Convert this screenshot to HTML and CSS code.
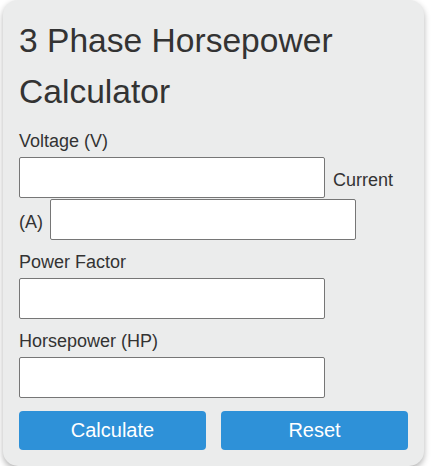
FILE: index.html
```html
<!DOCTYPE html>
<html lang="en">
<head>
<meta charset="utf-8">
<title>3 Phase Horsepower Calculator</title>
<link rel="stylesheet" href="styles.css">
</head>
<body>
<div class="card">
  <h1 class="title">3 Phase Horsepower Calculator</h1>
  <label class="label" for="voltage">Voltage (V)</label>
  <div class="row">
    <input class="field" id="voltage" type="text">
    <span class="inline-label">Current</span>
  </div>
  <div class="row row-gap">
    <span class="inline-label">(A)</span>
    <input class="field field-after" id="current" type="text">
  </div>
  <label class="label" for="pf">Power Factor</label>
  <input class="field" id="pf" type="text">
  <label class="label" for="hp">Horsepower (HP)</label>
  <input class="field" id="hp" type="text">
  <div class="buttons">
    <button class="btn" type="button">Calculate</button>
    <button class="btn" type="button">Reset</button>
  </div>
</div>
</body>
</html>
```
FILE: styles.css
```css
html, body {
  margin: 0;
  padding: 0;
  background: #ffffff;
}
body {
  font-family: "Liberation Sans", Arial, sans-serif;
  color: #333333;
}
.card {
  box-sizing: border-box;
  width: 421px;
  margin: 0 0 0 3px;
  padding: 15px 16px 16px;
  background: #ebecec;
  border-radius: 15px;
  box-shadow: 0 3px 6px rgba(0, 0, 0, 0.3);
}
.title {
  margin: 0;
  padding-bottom: 2px;
  font-size: 33.6px;
  font-weight: normal;
  line-height: 51px;
  color: #333333;
}
.label {
  display: block;
  margin: 12px 0 6px;
  font-size: 18px;
  line-height: 20px;
}
.row {
  display: flex;
  align-items: center;
}
.row-gap {
  margin-top: 1px;
}
.inline-label {
  font-size: 18px;
  line-height: 20px;
  padding-top: 5px;
}
.field {
  display: block;
  box-sizing: border-box;
  width: 306px;
  height: 41px;
  margin: 0 8px 0 0;
  padding: 0 6px;
  border: 1px solid #767676;
  border-radius: 2px;
  background: #ffffff;
  font-family: inherit;
  font-size: 16px;
}
.field-after {
  margin: 0 0 0 7px;
}
.buttons {
  display: flex;
  gap: 15px;
  margin-top: 13px;
}
.btn {
  width: 187px;
  height: 39px;
  border: none;
  border-radius: 4px;
  background: #2e91d8;
  color: #ffffff;
  font-family: inherit;
  font-size: 20px;
  padding: 0;
}
```
